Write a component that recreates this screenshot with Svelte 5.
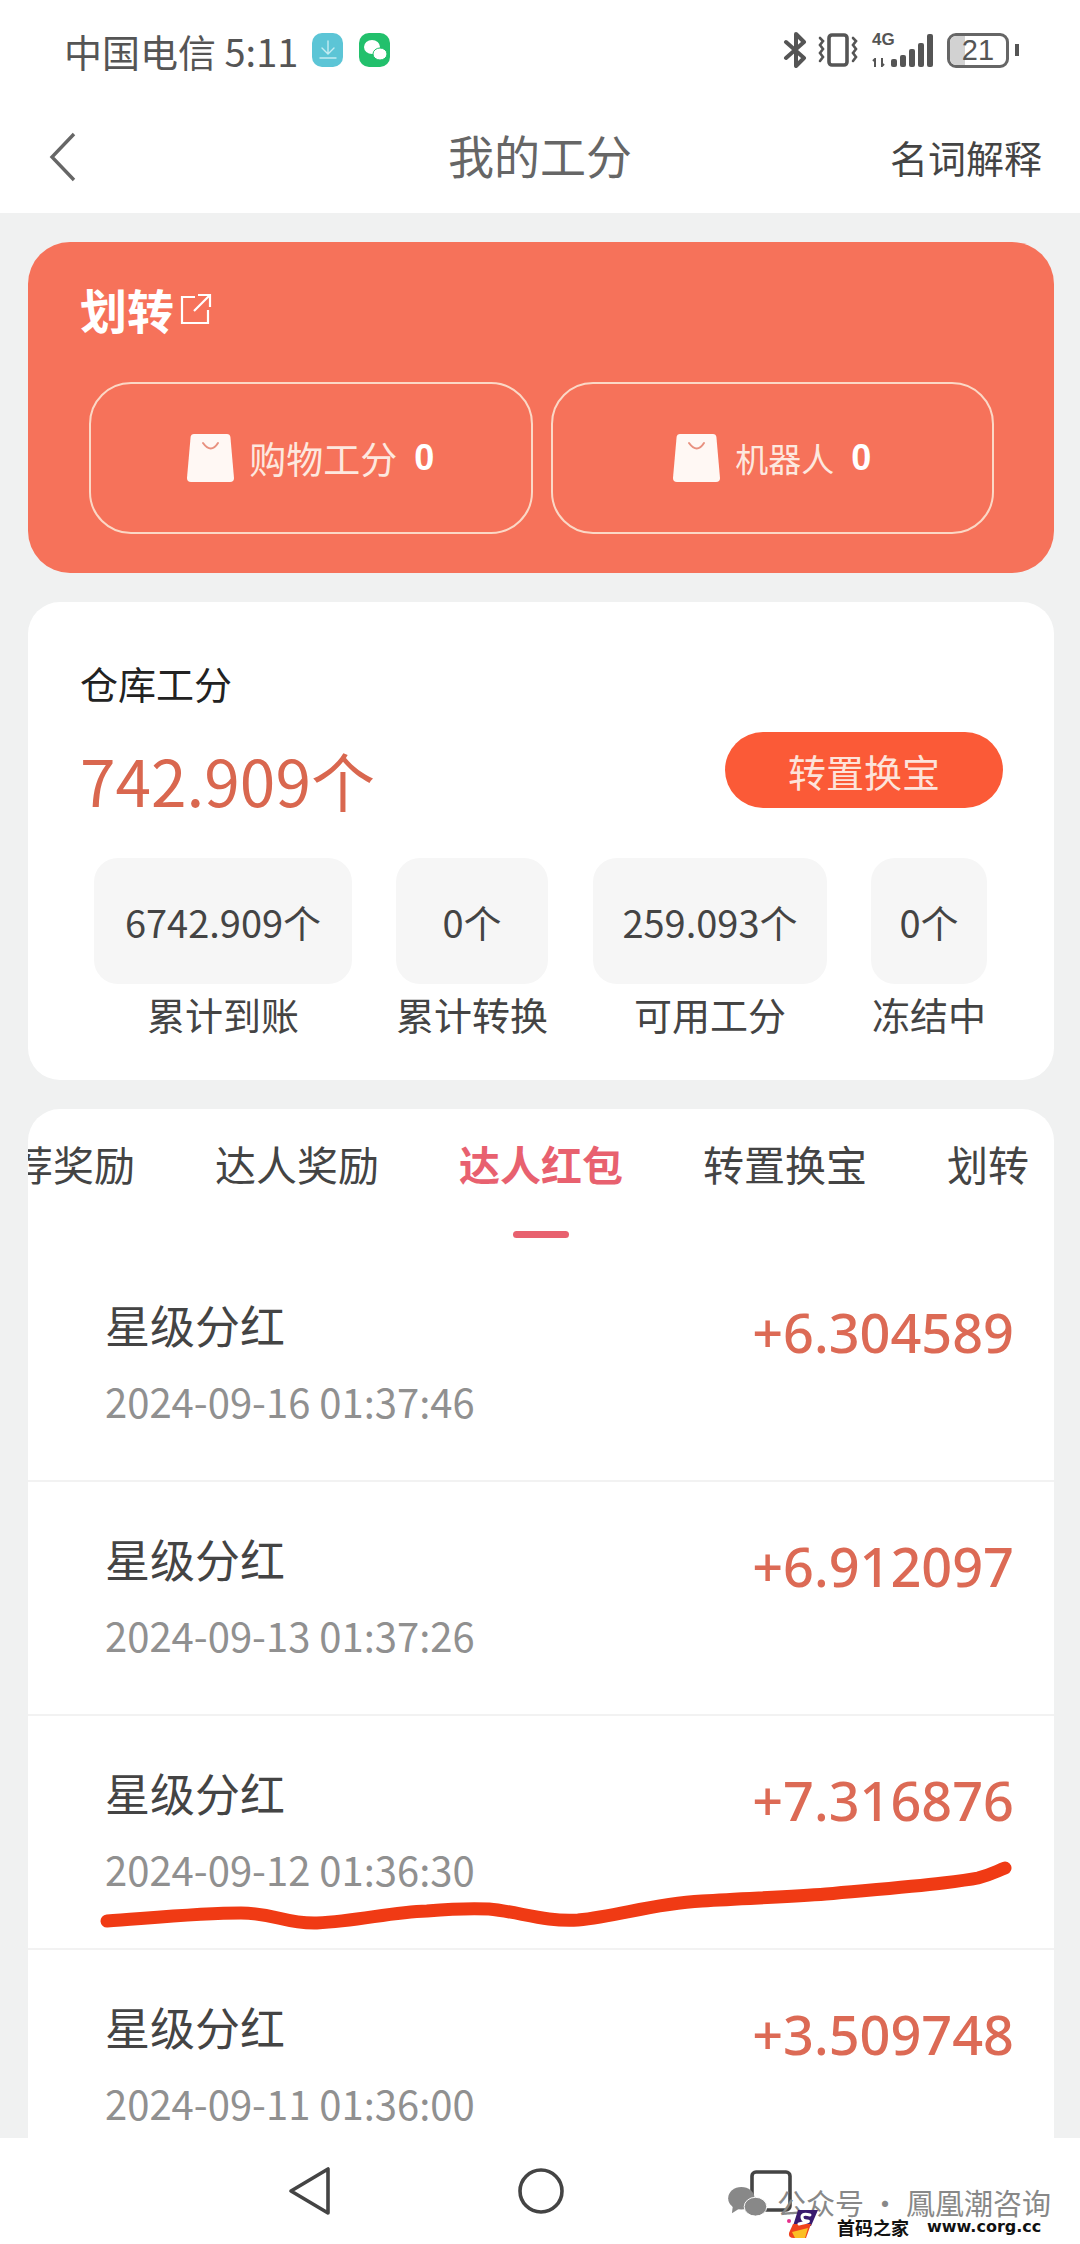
<script>
  const stats = [
    { value: '6742.909个', label: '累计到账', cls: 'w1' },
    { value: '0个', label: '累计转换', cls: 'w2' },
    { value: '259.093个', label: '可用工分', cls: 'w3' },
    { value: '0个', label: '冻结中', cls: 'w4' },
  ];
  const tabs = ['推荐奖励', '达人奖励', '达人红包', '转置换宝', '划转'];
  const records = [
    { time: '2024-09-16 01:37:46', amount: '+6.304589' },
    { time: '2024-09-13 01:37:26', amount: '+6.912097' },
    { time: '2024-09-12 01:36:30', amount: '+7.316876', marked: true },
    { time: '2024-09-11 01:36:00', amount: '+3.509748' },
  ];
</script>

<div class="page">
  <header class="top">
    <div class="status">
      <div class="status-left">
        <span class="carrier">中国电信 5:11</span>
        <span class="app-icon teal">
          <svg width="20" height="24" viewBox="0 0 20 24" fill="none" stroke="#c4ecf2" stroke-width="1.4" stroke-linecap="round">
            <path d="M10 3v13M4 10l6 6 6-6M2 20h16" />
          </svg>
        </span>
        <span class="app-icon green">
          <svg width="26" height="26" viewBox="0 0 26 26" fill="#fff">
            <ellipse cx="10" cy="10" rx="8" ry="7" />
            <ellipse cx="18" cy="17" rx="7" ry="6" stroke="#22c06c" />
          </svg>
        </span>
      </div>
      <div class="status-right">
        <svg width="25" height="36" viewBox="0 0 25 36" fill="none" stroke="#555" stroke-width="4" stroke-linecap="round" stroke-linejoin="round">
          <path d="M3 10l18 16-8 8V2l8 8L3 26" />
        </svg>
        <svg class="vibrate" width="40" height="34" viewBox="0 0 40 34" fill="none" stroke="#555" stroke-linecap="round">
          <rect x="11" y="2" width="18" height="30" rx="3" stroke-width="3.6" />
          <path d="M2 5l3 3-3 4 3 4-3 4 3 4-3 4M35 5l3 3-3 4 3 4-3 4 3 4-3 4" stroke-width="2.6" />
        </svg>
        <div class="signal">
          <span class="net">4G</span>
          <svg class="updown" width="14" height="9" viewBox="0 0 14 9" fill="none" stroke="#555" stroke-width="2">
            <path d="M3 9V1L1 3M10 0v8l2-2" />
          </svg>
          <span class="bar b1"></span><span class="bar b2"></span><span class="bar b3"></span><span class="bar b4"></span><span class="bar b5"></span>
        </div>
        <div class="battery"><span class="fill"></span><span class="level">21</span></div>
        <span class="cap"></span>
      </div>
    </div>
    <nav class="navbar">
      <svg class="back" width="30" height="50" viewBox="0 0 30 50" fill="none" stroke="#666" stroke-width="3.4">
        <path d="M26 2L4 25l22 23" />
      </svg>
      <h1>我的工分</h1>
      <span class="glossary">名词解释</span>
    </nav>
  </header>

  <main class="content">
    <section class="transfer">
      <div class="transfer-title">
        <span>划转</span>
        <svg width="32" height="32" viewBox="0 0 32 32" fill="none" stroke="#fff" stroke-width="2.2">
          <path d="M15 4H2v26h26V17M18 2h12v12M30 2L14 18" />
        </svg>
      </div>
      <div class="transfer-btns">
        {#each [{ name: '购物工分', cls: '' }, { name: '机器人', cls: 'small' }] as btn}
          <div class="transfer-btn {btn.cls}">
            <svg width="47" height="50" viewBox="0 0 47 50">
              <path d="M7 1h33q3 0 3.400 3l3.600 41q0 4-4 4H4q-4 0-4-4L3.600 4Q4 1 7 1z" fill="#fff8f4" />
              <path d="M16 10q8 11 15 0" fill="none" stroke="#e8917f" stroke-width="2" stroke-linecap="round" />
            </svg>
            <span class="btn-name">{btn.name}</span>
            <b>0</b>
          </div>
        {/each}
      </div>
    </section>

    <section class="warehouse">
      <div class="wh-title">仓库工分</div>
      <div class="wh-main">
        <span class="wh-amount">742.909个</span>
        <span class="wh-action">转置换宝</span>
      </div>
      <div class="stats">
        {#each stats as s}
          <div class="stat {s.cls}">
            <div class="stat-box">{s.value}</div>
            <div class="stat-label">{s.label}</div>
          </div>
        {/each}
      </div>
    </section>

    <section class="records">
      <div class="tabs">
        {#each tabs as tab, i}
          <span class="tab" class:active={i === 2}>{tab}</span>
        {/each}
      </div>
      {#each records as r}
        <div class="record">
          <div class="record-left">
            <div class="record-name">星级分红</div>
            <div class="record-time">{r.time}</div>
          </div>
          <div class="record-amount">{r.amount}</div>
          {#if r.marked}
            <svg class="scribble" width="920" height="80" viewBox="0 0 920 80" fill="none">
              <path d="M7 65C50 62 100 57 141 57C175 57 185 68 217 67C260 65 290 56 327 55C350 53 370 52 389 53C420 56 445 66 478 64C520 60 550 48 602 45C650 42 690 41 726 38C770 34 810 31 843 27C860 25 868 24 878 22C890 19 895 16 905 12" stroke="#f03a14" stroke-width="13" stroke-linecap="round" />
            </svg>
          {/if}
        </div>
      {/each}
    </section>
  </main>

  <footer class="softkeys">
    <svg width="44" height="50" viewBox="0 0 44 50" fill="none" stroke="#444" stroke-width="3.6" stroke-linejoin="round">
      <path d="M40 3v44L3 25z" />
    </svg>
    <svg width="46" height="46" viewBox="0 0 46 46" fill="none" stroke="#444" stroke-width="3.6">
      <circle cx="23" cy="23" r="21" />
    </svg>
    <svg width="42" height="42" viewBox="0 0 42 42" fill="none" stroke="#444" stroke-width="3.6">
      <rect x="2" y="2" width="38" height="38" rx="4" />
    </svg>
  </footer>

  <div class="watermark">
    <div class="wm-account">
      <svg width="40" height="32" viewBox="0 0 42 34" fill="#888">
        <ellipse cx="15" cy="13" rx="14" ry="12" />
        <path d="M6 21l-1 8 8-5z" />
        <ellipse cx="30" cy="22" rx="12" ry="10" stroke="#fff" />
      </svg>
      <span>公众号 · 鳳凰潮咨询</span>
    </div>
    <div class="wm-site">
      <svg class="wm-logo" width="31" height="28" viewBox="0 0 31 28">
        <path d="M11 0h20l-7 16H6z" fill="#3a1a6e" />
        <path d="M6 14h18l-5 14H7q-6 0-5-5z" fill="#f0421c" />
        <path d="M5 22l16-4-3 10H8z" fill="#fbbf24" />
        <path d="M23 5q-8-2-8 2t5 4-8 3" fill="none" stroke="#fff" stroke-width="3" stroke-linecap="round" />
        <circle cx="2" cy="11" r="2" fill="#e5308c" />
      </svg>
      <span class="wm-cn">首码之家</span>
      <span class="wm-url">www.corg.cc</span>
    </div>
  </div>
</div>

<style>
  :global(body) {
    margin: 0;
    background: #f0f1f1;
  }

  .page {
    position: relative;
    width: 1080px;
    height: 2244px;
    overflow: hidden;
    display: flex;
    flex-direction: column;
    background: #f0f1f1;
    font-family: "Noto Sans CJK SC", "Noto Sans", sans-serif;
  }

  .top {
    background: #fff;
    height: 213px;
    flex: none;
    padding: 0 24px 0 26px;
    box-sizing: border-box;
  }

  .status {
    height: 100px;
    display: flex;
    align-items: center;
    justify-content: space-between;
  }

  .status-left {
    display: flex;
    align-items: center;
    gap: 10px;
    padding-left: 38px;
  }

  .carrier {
    font-size: 38px;
    color: #555;
  }

  .app-icon {
    width: 31px;
    height: 34px;
    border-radius: 10px;
    display: flex;
    align-items: center;
    justify-content: center;
  }

  .teal {
    background: #5cc5d6;
    margin-left: 4px;
  }

  .green {
    background: #22c06c;
    margin-left: 6px;
  }

  .status-right {
    display: flex;
    align-items: center;
    gap: 10px;
    padding-right: 37px;
    color: #555;
  }

  .signal {
    position: relative;
    display: flex;
    align-items: flex-end;
    gap: 3px;
    width: 61px;
    height: 34px;
    justify-content: flex-end;
    margin: 0 4px;
  }

  .net {
    position: absolute;
    left: 0;
    top: -3px;
    font-size: 17px;
    line-height: 20px;
    font-weight: 700;
    color: #555;
    font-family: "Liberation Sans", sans-serif;
  }

  .updown {
    position: absolute;
    left: 0;
    bottom: 0;
  }

  .bar {
    width: 6px;
    background: #555;
    border-radius: 2px;
  }

  .b1 { height: 8px; }
  .b2 { height: 12px; }
  .b3 { height: 18px; }
  .b4 { height: 24px; }
  .b5 { height: 33px; }

  .battery {
    position: relative;
    width: 62px;
    height: 35px;
    box-sizing: border-box;
    border: 3px solid #666;
    border-radius: 9px;
    display: flex;
    align-items: center;
    justify-content: center;
    overflow: hidden;
  }

  .fill {
    position: absolute;
    left: 0;
    top: 0;
    bottom: 0;
    width: 15px;
    background: #d2d2d2;
  }

  .level {
    position: relative;
    font-size: 29px;
    line-height: 29px;
    color: #555;
    font-family: "Liberation Sans", sans-serif;
  }

  .cap {
    width: 4px;
    height: 12px;
    margin-left: -4px;
    background: #555;
  }

  .navbar {
    position: relative;
    height: 113px;
    display: flex;
    align-items: center;
    justify-content: space-between;
  }

  .back {
    margin-left: 22px;
  }

  h1 {
    position: absolute;
    left: -26px;
    right: -24px;
    top: 28px;
    margin: 0;
    text-align: center;
    font-size: 46px;
    line-height: 52px;
    font-weight: 400;
    color: #666;
    pointer-events: none;
  }

  .glossary {
    font-size: 38px;
    line-height: 50px;
    color: #444;
    margin-right: 14px;
  }

  .content {
    flex: 1;
    padding: 29px 26px 0 28px;
    display: flex;
    flex-direction: column;
    gap: 29px;
    min-height: 0;
  }

  .transfer {
    height: 331px;
    flex: none;
    box-sizing: border-box;
    background: #f6725a;
    border-radius: 42px;
    padding: 38px 52px 0 52px;
    color: #fff;
  }

  .transfer-title {
    display: flex;
    align-items: center;
    gap: 6px;
    font-size: 47px;
    line-height: 58px;
    font-weight: 700;
  }

  .transfer-btns {
    display: flex;
    gap: 18px;
    margin: 44px 0 0 9px;
    width: 905px;
  }

  .transfer-btn {
    flex: 1;
    height: 152px;
    box-sizing: border-box;
    border: 2px solid #fbd8c6;
    border-radius: 42px;
    display: flex;
    align-items: center;
    justify-content: center;
    gap: 15px;
    font-size: 37px;
    color: #fde8df;
  }

  .transfer-btn.small {
    font-size: 33px;
  }

  .transfer-btn b {
    margin-left: 2px;
    color: #fff;
    font-size: 36px;
    font-family: "Liberation Sans", sans-serif;
  }

  .warehouse {
    height: 478px;
    flex: none;
    box-sizing: border-box;
    background: #fff;
    border-radius: 32px;
    padding: 56px 52px 0;
  }

  .wh-title {
    font-size: 38px;
    line-height: 50px;
    color: #222;
  }

  .wh-main {
    display: flex;
    align-items: flex-start;
    justify-content: space-between;
    height: 90px;
    margin-top: 14px;
  }

  .wh-amount {
    font-size: 64px;
    line-height: 84px;
    color: #d9674f;
    margin-top: 15px;
  }

  .wh-action {
    width: 278px;
    height: 76px;
    margin-right: -1px;
    margin-top: 10px;
    background: #fb5a37;
    border-radius: 38px;
    color: #fde3da;
    font-size: 38px;
    display: flex;
    align-items: center;
    justify-content: center;
  }

  .stats {
    display: flex;
    margin-top: 46px;
  }

  .stat {
    display: flex;
    flex-direction: column;
    align-items: center;
    flex: none;
  }

  .w1 { width: 258px; margin-left: 14px; }
  .w2 { width: 152px; margin-left: 44px; }
  .w3 { width: 234px; margin-left: 45px; }
  .w4 { width: 116px; margin-left: 44px; }

  .stat-box {
    align-self: stretch;
    height: 126px;
    background: #f6f6f6;
    border-radius: 24px;
    display: flex;
    align-items: center;
    justify-content: center;
    font-size: 38px;
    color: #444;
    white-space: nowrap;
  }

  .stat-label {
    margin-top: 5px;
    font-size: 38px;
    line-height: 50px;
    color: #444;
    white-space: nowrap;
  }

  .records {
    flex: 1;
    min-height: 0;
    background: #fff;
    border-radius: 32px 32px 0 0;
    overflow: hidden;
  }

  .tabs {
    height: 139px;
    box-sizing: border-box;
    margin-left: -57px;
    padding-top: 26px;
    display: flex;
    gap: 80px;
    white-space: nowrap;
    font-size: 41px;
    color: #444;
    line-height: 56px;
  }

  .tab {
    position: relative;
    flex: none;
  }

  .tab.active {
    color: #e8616f;
    font-weight: 700;
  }

  .tab.active::after {
    content: '';
    position: absolute;
    left: 54px;
    top: 96px;
    width: 56px;
    height: 7px;
    border-radius: 4px;
    background: #e8616f;
  }

  .record {
    position: relative;
    height: 234px;
    box-sizing: border-box;
    border-bottom: 2px solid #f2f2f2;
    padding: 47px 40px 0 77px;
    display: flex;
    justify-content: space-between;
  }

  .record-name {
    font-size: 45px;
    line-height: 60px;
    color: #444;
  }

  .record-time {
    margin-top: 21px;
    font-size: 40px;
    line-height: 50px;
    color: #909090;
  }

  .record-amount {
    margin-top: 2px;
    font-size: 54px;
    line-height: 70px;
    color: #dc6a55;
    font-family: "Noto Sans", sans-serif;
    font-weight: 500;
  }

  .scribble {
    position: absolute;
    left: 72px;
    top: 140px;
  }

  .softkeys {
    position: absolute;
    left: 0;
    right: 0;
    bottom: 0;
    height: 106px;
    background: #fff;
    display: flex;
    align-items: center;
    gap: 186px;
    justify-content: center;
  }

  .watermark {
    position: absolute;
    left: 727px;
    top: 2186px;
    width: 353px;
    height: 56px;
  }

  .wm-account {
    display: flex;
    align-items: center;
    gap: 10px;
    font-size: 29px;
    line-height: 26px;
    color: #888;
    white-space: nowrap;
  }

  .wm-site {
    position: absolute;
    left: 60px;
    top: 24px;
    display: flex;
    align-items: center;
    white-space: nowrap;
    color: #111;
  }

  .wm-logo {
    margin-right: 19px;
  }

  .wm-cn {
    margin-top: 6px;
    font-size: 18px;
    line-height: 18px;
    font-weight: 700;
  }

  .wm-url {
    margin: 6px 0 0 18px;
    font-size: 16px;
    line-height: 18px;
    font-weight: 700;
    font-family: "DejaVu Sans", sans-serif;
  }
</style>
